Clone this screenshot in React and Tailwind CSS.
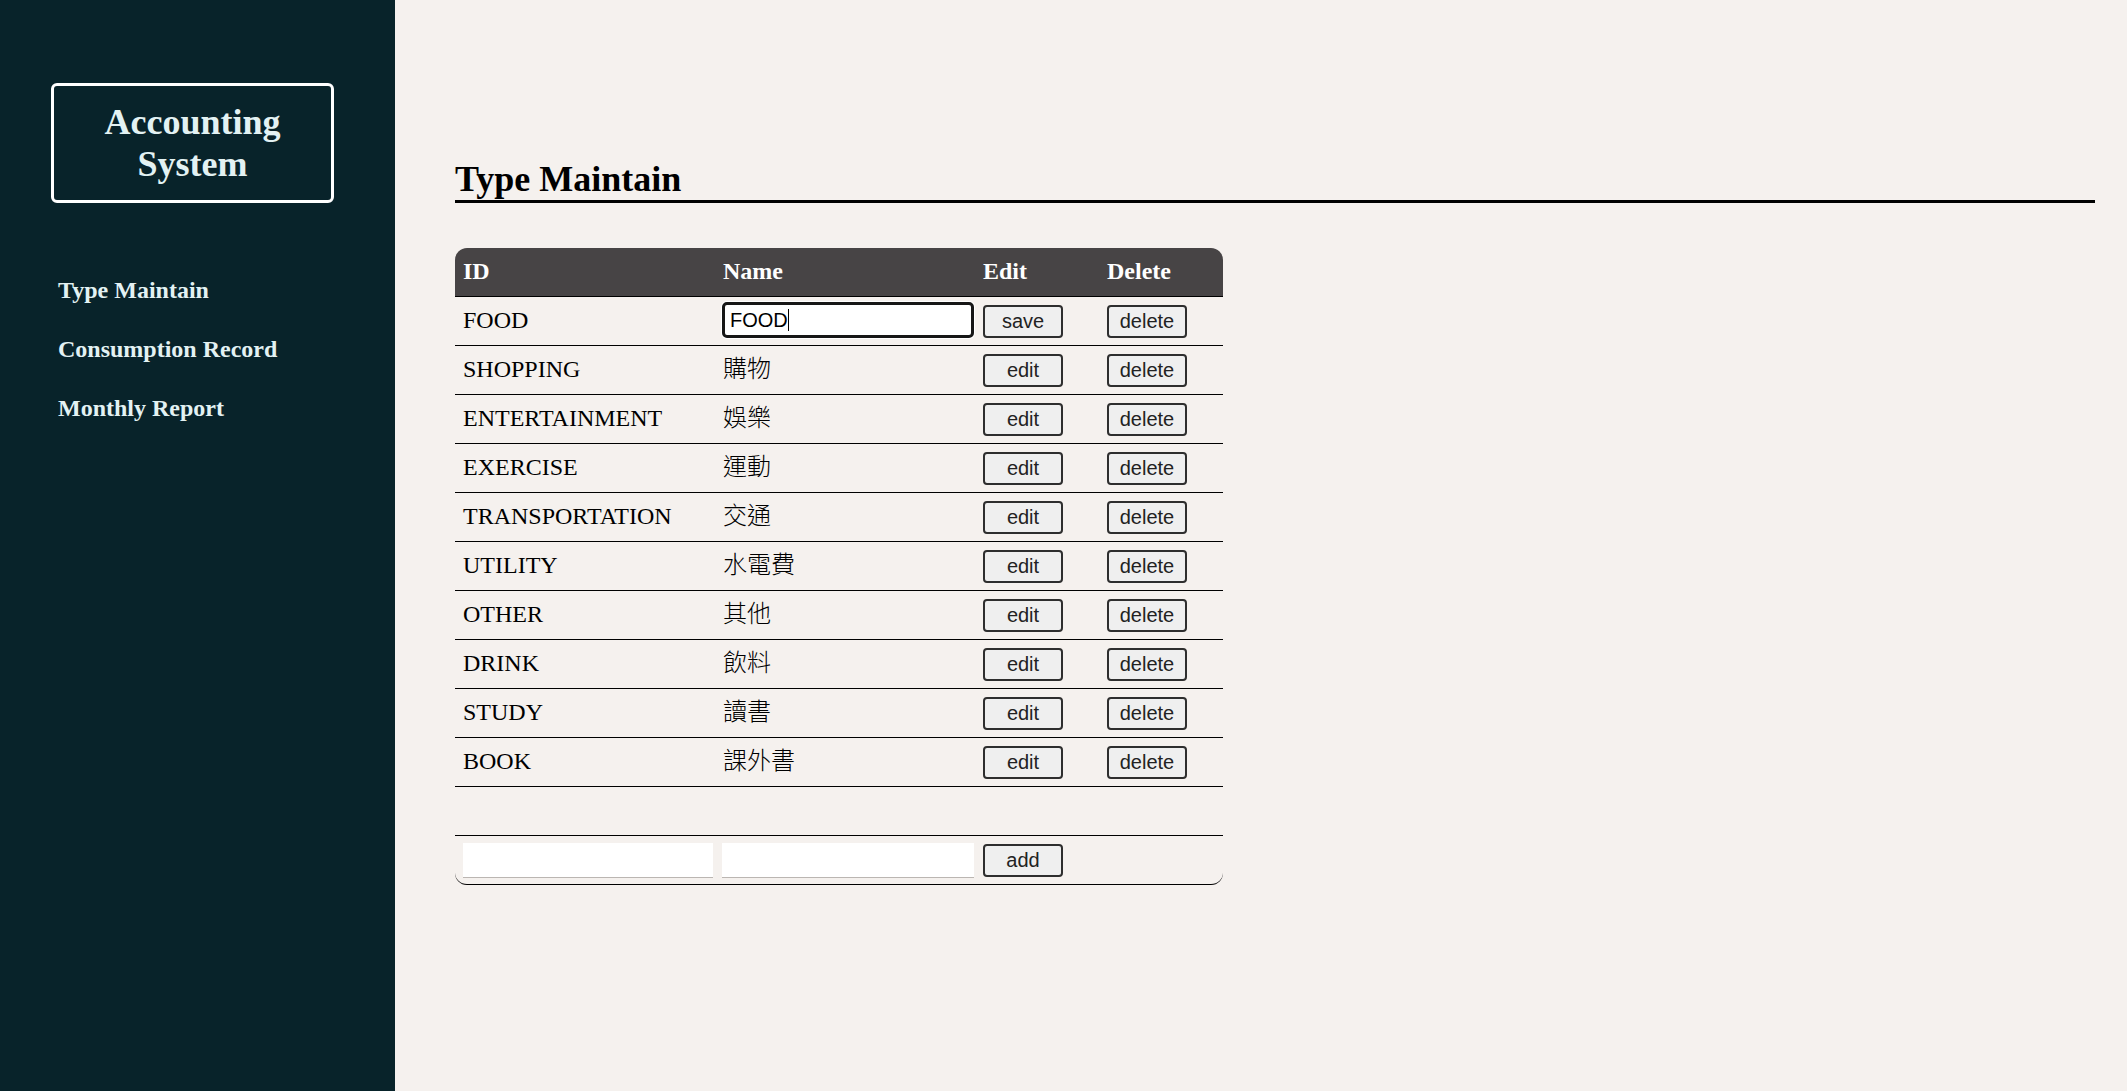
const types = [
  { id: 'FOOD', name: '食物', editing: true },
  { id: 'SHOPPING', name: '購物' },
  { id: 'ENTERTAINMENT', name: '娛樂' },
  { id: 'EXERCISE', name: '運動' },
  { id: 'TRANSPORTATION', name: '交通' },
  { id: 'UTILITY', name: '水電費' },
  { id: 'OTHER', name: '其他' },
  { id: 'DRINK', name: '飲料' },
  { id: 'STUDY', name: '讀書' },
  { id: 'BOOK', name: '課外書' },
];

const serif = "font-['Liberation_Serif','Noto_Sans_CJK_TC',serif]";
const sans = "font-['Liberation_Sans',Arial,sans-serif]";

function Btn({ children }) {
  return (
    <button
      className={`${sans} w-[80px] h-[33px] bg-[#efefef] border-2 border-[#2e2e2e] rounded-[4px] text-[20px] leading-none text-[#222]`}
    >
      {children}
    </button>
  );
}

function Row({ children }) {
  return (
    <div className="grid grid-cols-[260px_260px_124px_124px] items-center h-[49px] pb-[2px] border-b border-black">
      {children}
    </div>
  );
}

export default function App() {
  return (
    <div className={`${serif} flex h-screen w-full overflow-hidden bg-[#f5f1ee]`}>
      {/* Sidebar */}
      <aside className="w-[395px] shrink-0 bg-[#08232a] pt-[83px]">
        <div className="ml-[51px] w-[283px] h-[120px] border-[3px] border-white rounded-[6px] flex items-center justify-center">
          <h1 className="text-[36px] font-bold text-center text-[#e3f2f3] leading-[42px]">
            Accounting
            <br />
            System
          </h1>
        </div>

        <nav className="mt-[73px] ml-[58px] flex flex-col gap-[31px] text-[24px] font-bold text-[#e3f2f3] leading-[28px]">
          <a href="#">Type Maintain</a>
          <a href="#">Consumption Record</a>
          <a href="#">Monthly Report</a>
        </nav>
      </aside>

      {/* Main */}
      <main className="flex-1 pl-[60px] pr-[32px] pt-[159px]">
        <h2 className="text-[36px] font-bold text-black leading-[41px] border-b-[3px] border-black">
          Type Maintain
        </h2>

        <div className="mt-[45px] w-[768px] rounded-b-xl border-b border-black text-[24px] text-black">
          {/* Header */}
          <div className="grid grid-cols-[260px_260px_124px_124px] items-center h-[49px] pb-[2px] bg-[#474445] rounded-t-xl border-b border-black font-bold text-white">
            <div className="px-2">ID</div>
            <div className="px-2">Name</div>
            <div className="px-2">Edit</div>
            <div className="px-2">Delete</div>
          </div>

          {types.map((t) => (
            <Row key={t.id}>
              <div className="px-2">{t.id}</div>
              <div className="px-2 font-light">
                {t.editing ? (
                  <div className={`${sans} font-normal flex items-center w-[252px] h-[36px] -ml-[1px] bg-white border-[3px] border-[#161616] rounded-[5px] pl-[5px] text-[20px] shadow-[0_0_0_1px_#fff]`}>
                    <span>FOOD</span>
                    <span className="w-px h-[22px] bg-black" />
                  </div>
                ) : (
                  t.name
                )}
              </div>
              <div className="px-2">
                <Btn>{t.editing ? 'save' : 'edit'}</Btn>
              </div>
              <div className="px-2">
                <Btn>delete</Btn>
              </div>
            </Row>
          ))}

          {/* Spacer row */}
          <Row>
            <div />
          </Row>

          {/* Add row */}
          <div className="grid grid-cols-[260px_260px_124px_124px] items-center h-[48px] pb-[2px]">
            <div className="px-2">
              <input className={`${sans} w-[250px] h-[35px] bg-white border-b border-[#bbb6b2] outline-none px-1 text-[20px]`} />
            </div>
            <div className="px-2">
              <input className={`${sans} w-[252px] h-[35px] -ml-[1px] bg-white border-b border-[#bbb6b2] outline-none px-1 text-[20px]`} />
            </div>
            <div className="px-2">
              <Btn>add</Btn>
            </div>
            <div />
          </div>
        </div>
      </main>
    </div>
  );
}
